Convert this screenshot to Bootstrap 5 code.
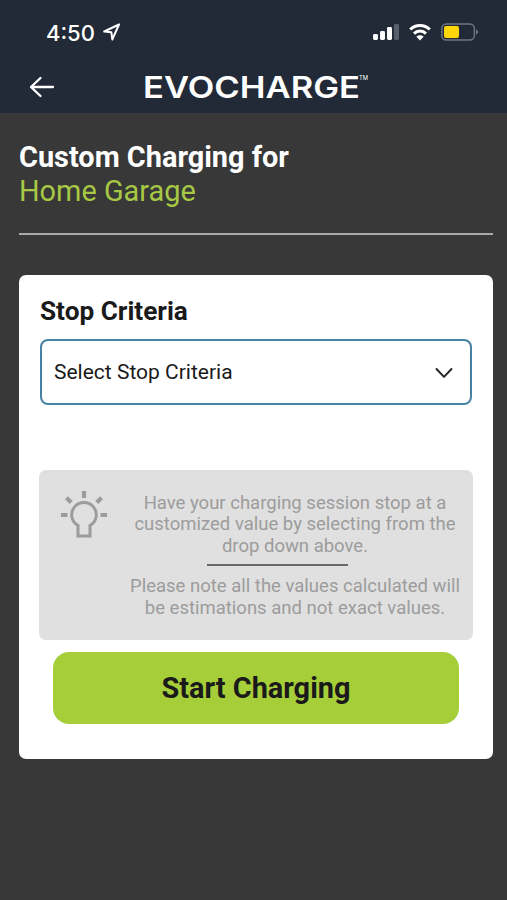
<!DOCTYPE html>
<html lang="en">
<head>
<meta charset="utf-8">
<meta name="viewport" content="width=device-width, initial-scale=1">
<title>EvoCharge – Custom Charging</title>
<link href="https://cdn.jsdelivr.net/npm/bootstrap@5.3.0/dist/css/bootstrap.min.css" rel="stylesheet">
<style>
body{font-family:Roboto,"Liberation Sans",sans-serif;background:#383838;color:#1a1a1a;min-height:900px}
svg{display:block;flex-shrink:0}
.app-top{background:#222a38;height:113px}
.status{height:64px;padding:0 29px 0 46px}
.clock{font:500 22px/24px Inter,sans-serif;padding-top:1px}
.brand-row{height:46px;padding-left:28px}
.brand-row button{width:28px}
.logo{margin-left:83px}
.logo text{font-family:Inter,sans-serif}
.page{padding:27px 14px 0 19px}
.title{font-size:28.9px;line-height:34px}
.place{color:#a6c844}
.rule{height:2px;background:#a9a9a9;margin:25px 0 40px}
.panel{height:484px;border-radius:7px;padding:20px 21px 0 21px}
.label{font-size:26.2px;line-height:32px}
.picker{height:66px;border:2px solid #4682a5;border-radius:8px;margin-top:12px;padding:1px 17px 0 12px;font-size:21px;color:#1a1a1a}
.tip{height:170px;margin:65px -1px 0 -1px;background:#e0e0e0;border-radius:7px;color:#9c9c9c;padding:22px 13px 0 21px;font-size:18.5px;line-height:21.6px}
.tip svg{margin-top:-1px}
.tip-rule{width:141px;height:2px;background:#6a6a6a;margin:7px 0 10px 77px}
.tip-text{padding-top:.6px}
.start{height:72px;margin:12px 13px 0 13px;border-radius:16px;background:#a6ce39;color:#1a1a1a;font-size:28.9px;line-height:1;padding:1px 0 0}
</style>
</head>
<body>
<header class="app-top text-white">
  <div class="status d-flex align-items-center">
    <span class="clock">4:50</span>
    <svg class="ms-2" width="18" height="18" viewBox="0 0 18 18" fill="none" stroke="#fff" stroke-width="2" stroke-linejoin="round"><path d="M16 1.5 1.2 8.500l7.2.8.9 7.200z"/></svg>
    <div class="d-flex align-items-center ms-auto">
      <svg width="26" height="18" viewBox="0 0 26 18" fill="#fff"><rect y="11" width="5" height="6" rx="1.4"/><rect x="7" y="8" width="5" height="9" rx="1.4"/><rect x="14" y="4" width="5" height="13" rx="1.4"/><rect x="21" y="1" width="5" height="16" rx="1.4" opacity=".25"/></svg>
      <svg style="margin-left:10px" width="22" height="18" viewBox="0 0 22 18" fill="none" stroke="#fff" stroke-width="3"><path d="M1.2 6.500a14 14 0 0 1 19.600 0M5 10.600a8.500 8.500 0 0 1 12 0"/><path d="M11 17.400 7.400 13.700a5.200 5.200 0 0 1 7.200 0z" fill="#fff" stroke="none"/></svg>
      <svg style="margin-left:10px" width="37" height="18" viewBox="0 0 37 18"><rect x=".8" y="1" width="32.600" height="16" rx="4.500" fill="none" stroke="#727780" stroke-width="1.400"/><rect x="3" y="3" width="15" height="12" rx="2" fill="#ffd60a"/><path d="M35 6.500q2 .7 2 2.500t-2 2.500z" fill="#727780"/></svg>
    </div>
  </div>
  <nav class="brand-row d-flex align-items-center">
    <button class="btn p-0 border-0" type="button" aria-label="Back"><svg width="28" height="24" viewBox="0 0 28 24" fill="none" stroke="#fff" stroke-width="2.300" stroke-linecap="round" stroke-linejoin="round"><path d="M25 12H3M12.500 3 3 12l9.500 9"/></svg></button>
    <svg class="logo" width="240" height="44" viewBox="0 0 240 44" fill="#fff"><text x="4" y="32.500" font-size="29.500" font-weight="600" textLength="217" lengthAdjust="spacingAndGlyphs">EVOCHARGE</text><text x="220" y="15" font-size="5.500" textLength="9" lengthAdjust="spacingAndGlyphs">TM</text></svg>
  </nav>
</header>
<main class="page">
  <h1 class="title fw-bold text-white m-0">Custom Charging for</h1>
  <div class="title place">Home Garage</div>
  <div class="rule"></div>
  <section class="panel bg-white">
    <h2 class="label fw-bold m-0">Stop Criteria</h2>
    <button type="button" class="picker btn w-100 d-flex align-items-center justify-content-between"><span>Select Stop Criteria</span>
      <svg width="18" height="12" viewBox="0 0 18 12" fill="none" stroke="#222" stroke-width="1.900" stroke-linecap="round" stroke-linejoin="round"><path d="m1.500 2 7.500 7.800L16.500 2"/></svg></button>
    <div class="tip d-flex">
      <svg width="48" height="48" viewBox="0 0 48 48" fill="none" stroke="#9c9c9c" stroke-width="3"><path d="M18 45V34.500a12.300 12.300 0 1 1 12 0V45z"/><path stroke-width="4.200" d="M24 0v7M1 24h6.500M40.500 24H47M6.500 6.700l4.700 4.700M41.500 6.700l-4.700 4.700"/></svg>
      <div class="tip-text text-center text-nowrap ms-auto">
        <div>Have your charging session stop at a<br>customized value by selecting from the<br>drop down above.</div>
        <div class="tip-rule"></div>
        <div>Please note all the values calculated will<br>be estimations and not exact values.</div>
      </div>
    </div>
    <div class="d-grid"><button type="button" class="start btn fw-bold">Start Charging</button></div>
  </section>
</main>
<script src="https://cdn.jsdelivr.net/npm/bootstrap@5.3.0/dist/js/bootstrap.bundle.min.js"></script>
</body>
</html>
